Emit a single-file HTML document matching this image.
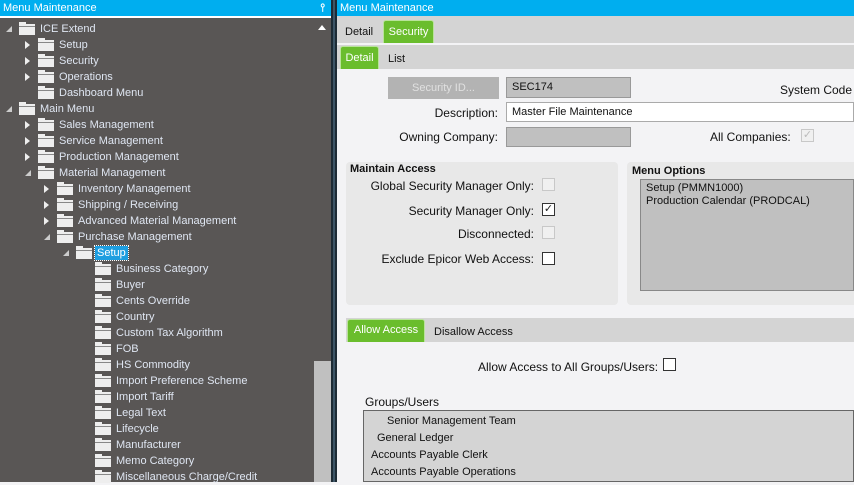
<!DOCTYPE html>
<html><head><style>
*{margin:0;padding:0;box-sizing:border-box}
body{width:854px;height:482px;overflow:hidden;font-family:"Liberation Sans",sans-serif;font-size:11px;background:#f3f3f5;position:relative}
.a{position:absolute}
.tb{background:#00aeef;color:#fff;height:16px;font-size:11px;line-height:16px;padding-left:3px}
#left{left:0;top:0;width:331px;height:482px;background:#595655}
.row{position:absolute;height:16px;line-height:16px;color:#dfe6f2;white-space:nowrap}
.fold{position:absolute;width:16px;height:11px;background:#eeeeee;top:3px}
.fold:before{content:"";position:absolute;left:0;top:-2px;width:7px;height:2px;background:#eee}
.fold:after{content:"";position:absolute;left:0;top:2px;width:16px;height:1px;background:#888}
.arc{position:absolute;top:4px;width:0;height:0;border-top:4px solid transparent;border-bottom:4px solid transparent;border-left:5px solid #eee}
.are{position:absolute;top:5px;width:0;height:0;border-left:6px solid transparent;border-bottom:6px solid #ccc}
.lbl{position:absolute;color:#111;text-align:right}
.tab{position:absolute;background:#6abd2d;color:#fff;border:1px solid #b9e39a;border-bottom:none;border-radius:3px 3px 0 0;text-align:center}
.cb{position:absolute;width:13px;height:13px;background:#fff;border:1px solid #333}
.cbd{border-color:#c8c8c8;background:#f0f0f0}
</style></head><body>
<div id="left" class="a">
<div class="a tb" style="left:0;top:0;width:331px">Menu Maintenance<span style="position:absolute;right:6px;font-weight:bold">&#x2AEF;</span></div>
<div class="a" style="left:0;top:16px;width:331px;height:2px;background:#fff"></div>
<div class="a" style="left:318px;top:25px;width:0;height:0;border-left:4px solid transparent;border-right:4px solid transparent;border-bottom:5px solid #fff"></div>
<div class="a" style="left:314px;top:361px;width:17px;height:121px;background:#c0c0c0"></div>
<div id="tree"></div>
</div>
<div class="a" style="left:331px;top:0;width:6px;height:482px;background:#1d2b35"></div>
<div class="a" style="left:333px;top:0;width:2px;height:482px;background:#3d5566"></div>

<div class="a tb" style="left:337px;top:0;width:517px">Menu Maintenance</div>
<div class="a" style="left:337px;top:16px;width:517px;height:27px;background:#d4d4d4"></div>
<div class="a" style="left:345px;top:26px;color:#111">Detail</div>
<div class="tab" style="left:383px;top:20px;width:51px;height:23px;line-height:22px">Security</div>
<div class="a" style="left:337px;top:43px;width:517px;height:2px;background:#f3f3f5"></div>
<div class="a" style="left:337px;top:45px;width:517px;height:24px;background:#d4d4d4"></div>
<div class="tab" style="left:340px;top:46px;width:39px;height:23px;line-height:22px">Detail</div>
<div class="a" style="left:388px;top:53px;color:#111">List</div>

<div class="a" style="left:388px;top:77px;width:111px;height:22px;background:#b3b3b3;color:#e0e0e0;text-align:center;line-height:22px">Security ID...</div>
<div class="a" style="left:506px;top:77px;width:125px;height:21px;background:#c0c0c0;border:1px solid #999;padding-left:5px;line-height:18px;color:#111">SEC174</div>
<div class="a" style="left:780px;top:83px;color:#111;font-size:12px">System Code</div>
<div class="lbl" style="left:380px;top:106px;width:118px;font-size:12px">Description:</div>
<div class="a" style="left:506px;top:102px;width:348px;height:20px;background:#fff;border:1px solid #aaa;padding-left:5px;line-height:18px;color:#111">Master File Maintenance</div>
<div class="lbl" style="left:380px;top:130px;width:118px;font-size:12px">Owning Company:</div>
<div class="a" style="left:506px;top:127px;width:125px;height:20px;background:#c0c0c0;border:1px solid #999"></div>
<div class="a" style="left:710px;top:130px;color:#111;font-size:12px">All Companies:</div>
<div class="cb cbd" style="left:801px;top:129px;color:#bbb;font-size:11px;line-height:11px;text-align:center">&#10003;</div>

<div class="a" style="left:346px;top:162px;width:272px;height:143px;background:#e8e8e8;border-radius:4px"></div>
<div class="a" style="left:350px;top:163px;font-weight:bold;color:#111">Maintain Access</div>
<div class="lbl" style="left:350px;top:179px;width:184px;font-size:12px">Global Security Manager Only:</div>
<div class="cb cbd" style="left:542px;top:178px"></div>
<div class="lbl" style="left:350px;top:204px;width:184px;font-size:12px">Security Manager Only:</div>
<div class="cb" style="left:542px;top:203px;line-height:11px;text-align:center;color:#222">&#10003;</div>
<div class="lbl" style="left:350px;top:227px;width:184px;font-size:12px">Disconnected:</div>
<div class="cb cbd" style="left:542px;top:226px"></div>
<div class="lbl" style="left:350px;top:252px;width:184px;font-size:12px">Exclude Epicor Web Access:</div>
<div class="cb" style="left:542px;top:252px"></div>

<div class="a" style="left:627px;top:162px;width:227px;height:143px;background:#e8e8e8;border-radius:4px 0 0 4px"></div>
<div class="a" style="left:632px;top:165px;font-weight:bold;color:#111">Menu Options</div>
<div class="a" style="left:640px;top:179px;width:214px;height:112px;background:#c0c0c0;border:1px solid #888;padding:2px 5px 0;line-height:13px;color:#111">Setup (PMMN1000)<br>Production Calendar (PRODCAL)</div>

<div class="a" style="left:346px;top:318px;width:508px;height:24px;background:#d4d4d4"></div>
<div class="tab" style="left:347px;top:319px;width:78px;height:23px;line-height:21px">Allow Access</div>
<div class="a" style="left:434px;top:326px;color:#111">Disallow Access</div>
<div class="a" style="left:478px;top:360px;color:#111;font-size:12px">Allow Access to All Groups/Users:</div>
<div class="cb" style="left:663px;top:358px"></div>
<div class="a" style="left:365px;top:395px;color:#111;font-size:12px">Groups/Users</div>
<div class="a" style="left:363px;top:410px;width:491px;height:72px;background:#d4d4d4;border:1px solid #666;color:#111;line-height:17px;padding-top:2px">
<div style="padding-left:23px">Senior Management Team</div>
<div style="padding-left:13px">General Ledger</div>
<div style="padding-left:7px">Accounts Payable Clerk</div>
<div style="padding-left:7px">Accounts Payable Operations</div>
</div>

<script>
var rows=[[0,'e','ICE Extend'],[1,'c','Setup'],[1,'c','Security'],[1,'c','Operations'],[1,'n','Dashboard Menu'],[0,'e','Main Menu'],[1,'c','Sales Management'],[1,'c','Service Management'],[1,'c','Production Management'],[1,'e','Material Management'],[2,'c','Inventory Management'],[2,'c','Shipping / Receiving'],[2,'c','Advanced Material Management'],[2,'e','Purchase Management'],[3,'e','Setup'],
[4,'n','Business Category'],[4,'n','Buyer'],[4,'n','Cents Override'],[4,'n','Country'],[4,'n','Custom Tax Algorithm'],[4,'n','FOB'],[4,'n','HS Commodity'],[4,'n','Import Preference Scheme'],[4,'n','Import Tariff'],[4,'n','Legal Text'],[4,'n','Lifecycle'],[4,'n','Manufacturer'],[4,'n','Memo Category'],[4,'n','Miscellaneous Charge/Credit']];
var h='';
rows.forEach(function(r,i){var top=21+16*i,tx=40+19*r[0];
h+='<div class="row" style="left:0;top:'+top+'px;width:314px">';
if(r[1]=='c')h+='<div class="arc" style="left:'+(tx-34)+'px"></div>';
if(r[1]=='e')h+='<div class="are" style="left:'+(tx-34)+'px"></div>';
h+='<div class="fold" style="left:'+(tx-21)+'px"></div>';
if(i==14)h+='<span style="position:absolute;left:'+(tx-2)+'px;top:1px;height:14px;line-height:14px;padding:0 2px;background:#1e9ee0;color:#fff;outline:1px dotted #fff">'+r[2]+'</span>';
else h+='<span style="position:absolute;left:'+tx+'px">'+r[2]+'</span>';
h+='</div>';});
document.getElementById('tree').innerHTML=h;
</script>
</body></html>
